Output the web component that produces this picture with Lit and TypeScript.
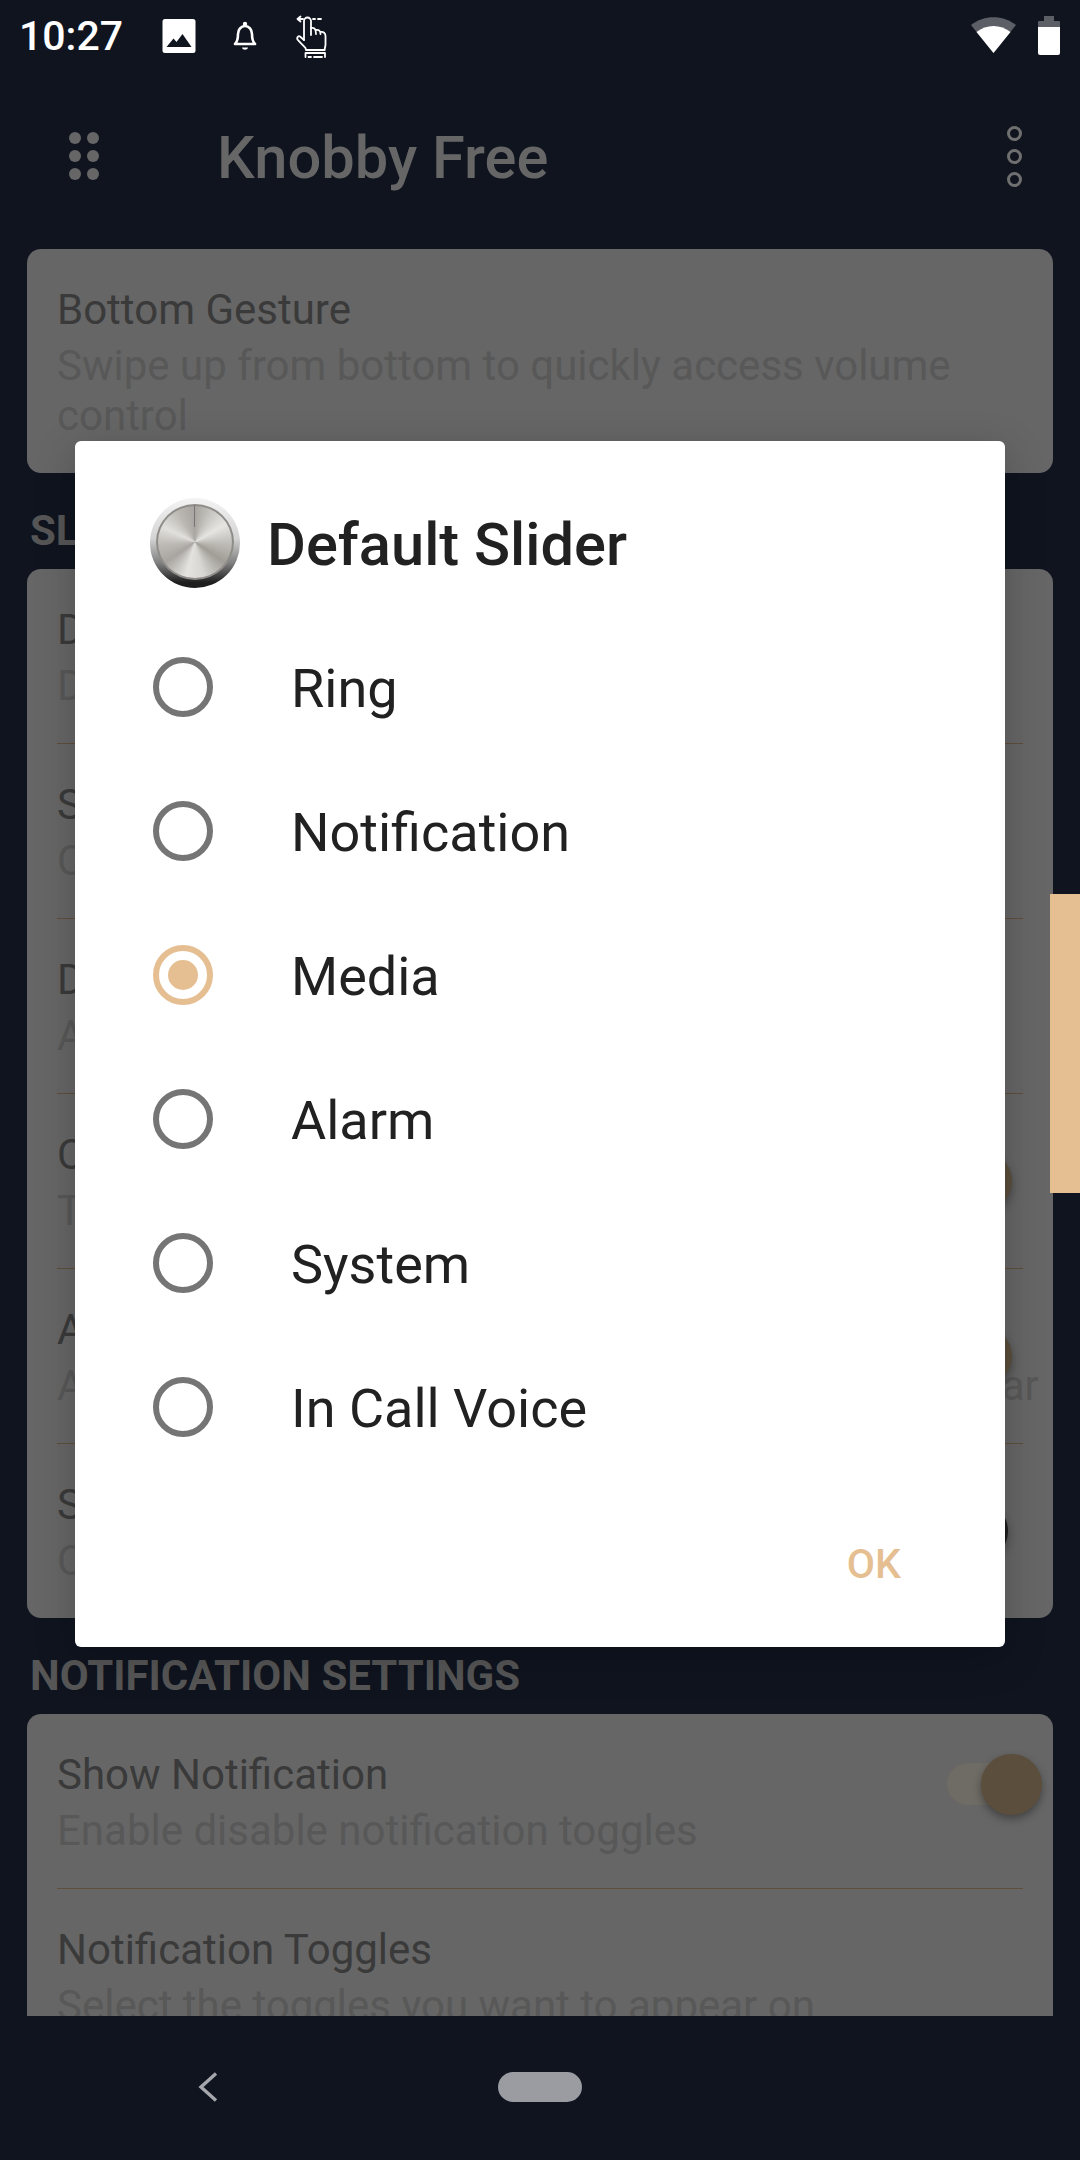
import { html, css, LitElement } from 'lit';
import { customElement } from 'lit/decorators.js';

const CHANNELS = ['Ring', 'Notification', 'Media', 'Alarm', 'System', 'In Call Voice'];
const SELECTED = 'Media';

interface Row {
  title: string;
  sub: string;
  swatch?: string;
}

const SLIDER_ROWS: Row[] = [
  { title: 'Default Slider', sub: 'Default volume slider to show' },
  { title: 'Slider Style', sub: 'Choose the slider style' },
  { title: 'Dismiss Timeout', sub: 'Auto hide after a few seconds' },
  { title: 'Color', sub: 'Tint for the slider', swatch: 'accent' },
  { title: 'Accent', sub: 'Accent color applied to the sliders and the status bar', swatch: 'accent' },
  { title: 'Slider Background', sub: 'Color of the slider', swatch: 'dark' },
];

@customElement('app-root')
export class AppRoot extends LitElement {
  static styles = css`
    :host {
      display: flex;
      flex-direction: column;
      position: relative;
      width: 1080px;
      height: 2160px;
      overflow: hidden;
      background: #0f141f;
      font-family: Roboto, sans-serif;
    }

    .status {
      height: 72px;
      flex: none;
      position: relative;
    }

    .time {
      position: absolute;
      left: 19px;
      top: 13px;
      font-size: 41px;
      line-height: 46px;
      font-weight: 500;
      color: #fff;
    }

    .status svg {
      position: absolute;
      display: block;
    }

    .toolbar {
      height: 177px;
      flex: none;
      display: flex;
      align-items: center;
      padding-bottom: 9px;
      box-sizing: border-box;
      position: relative;
    }

    .dots {
      margin-left: 69px;
      display: grid;
      grid-template-columns: 12px 12px;
      gap: 6px;
    }

    .dots i {
      width: 12px;
      height: 12px;
      border-radius: 50%;
      background: #666;
    }

    .app-title {
      margin-left: 118px;
      padding-top: 4px;
      font-size: 59.6px;
      font-weight: 500;
      color: #666;
      flex: 1;
    }

    .more {
      margin-right: 58px;
      display: flex;
      flex-direction: column;
      gap: 8px;
    }

    .more i {
      width: 15px;
      height: 15px;
      box-sizing: border-box;
      border: 3px solid #6f6f6f;
      border-radius: 50%;
    }

    .main {
      flex: 1;
      min-height: 0;
      overflow: hidden;
      padding: 0 27px;
    }

    .card {
      background: #666;
      border-radius: 14px;
      padding: 0 30px;
    }

    .section {
      font-size: 42px;
      line-height: 44px;
      font-weight: 700;
      color: #565656;
      padding: 36px 0 16px 3px;
    }

    .row {
      position: relative;
      padding: 33px 0 32px;
      border-bottom: 1px solid #5f4e3a;
    }

    .row:last-child {
      border-bottom: none;
    }

    .row-title {
      font-size: 42px;
      line-height: 56px;
      color: #3a3a3a;
      white-space: nowrap;
    }

    .row-sub {
      margin-top: 3px;
      font-size: 42px;
      line-height: 50px;
      color: #585858;
    }

    .row-sub.single {
      white-space: nowrap;
    }

    .swatch {
      position: absolute;
      right: 11px;
      top: 50%;
      width: 60px;
      height: 60px;
      margin-top: -30px;
      border-radius: 50%;
      box-shadow: 0 4px 8px rgba(0, 0, 0, 0.3);
    }

    .swatch.accent {
      background: #5b4e3c;
    }

    .swatch.dark {
      background: #1d1d1d;
      right: 15px;
    }

    .switch {
      position: absolute;
      right: -19px;
      top: 40px;
      width: 95px;
      height: 61px;
    }

    .switch .track {
      position: absolute;
      left: 0;
      right: 20px;
      top: 9px;
      height: 42px;
      border-radius: 21px;
      background: #6f6b65;
    }

    .switch .thumb {
      position: absolute;
      right: 0;
      top: 0;
      width: 61px;
      height: 61px;
      border-radius: 50%;
      background: #5b4e3c;
      box-shadow: 0 4px 8px rgba(0, 0, 0, 0.35);
    }

    .nav {
      height: 144px;
      flex: none;
      position: relative;
      display: flex;
      align-items: center;
      padding-bottom: 3px;
      box-sizing: border-box;
    }

    .nav svg {
      margin-left: 198px;
      display: block;
    }

    .home {
      margin-left: 280px;
      width: 84px;
      height: 30px;
      border-radius: 15px;
      background: #9a9ca2;
    }

    .handle {
      position: absolute;
      right: 0;
      top: 894px;
      width: 30px;
      height: 299px;
      background: #e5bf92;
    }

    .dialog {
      position: absolute;
      left: 75px;
      top: 441px;
      width: 930px;
      height: 1206px;
      background: #fff;
      border-radius: 6px;
      box-shadow: 0 10px 40px rgba(0, 0, 0, 0.22);
      display: flex;
      flex-direction: column;
    }

    .dialog-head {
      height: 174px;
      box-sizing: border-box;
      padding: 57px 0 27px 75px;
      display: flex;
      align-items: center;
      gap: 27px;
    }

    .dialog-title {
      font-size: 59.6px;
      font-weight: 500;
      color: #212121;
      padding-top: 3px;
    }

    .knob {
      position: relative;
      width: 90px;
      height: 90px;
      flex: none;
      border-radius: 50%;
      background: linear-gradient(180deg, #f4f4f4 0%, #d4d4d4 45%, #808080 72%, #1e1e1e 94%);
    }

    .knob .face {
      position: absolute;
      inset: 6px 6px 8px;
      border-radius: 50%;
      border: 2px solid #8f8d89;
      box-sizing: border-box;
      background: conic-gradient(
        #a8a5a0 0deg, #c9c7c2 30deg, #e6e5e2 60deg, #bdbab5 95deg, #a09d97 125deg,
        #d8d6d2 165deg, #e4e3e0 195deg, #a8a5a0 235deg, #bdbab5 265deg, #e2e0dd 295deg,
        #bbb8b3 330deg, #a8a5a0 360deg
      );
    }

    .knob .tick {
      position: absolute;
      left: 44px;
      top: 7px;
      width: 1px;
      height: 22px;
      background: #77757a;
    }

    .option {
      height: 144px;
      flex: none;
      display: flex;
      align-items: center;
      padding-left: 78px;
      font-size: 54px;
      color: #212121;
    }

    .option-label {
      padding-top: 3px;
    }

    .radio {
      width: 60px;
      height: 60px;
      flex: none;
      box-sizing: border-box;
      border: 6px solid #757575;
      border-radius: 50%;
      margin-right: 78px;
      display: flex;
      align-items: center;
      justify-content: center;
    }

    .radio.on {
      border-color: #e5bf92;
    }

    .radio.on::after {
      content: '';
      width: 30px;
      height: 30px;
      border-radius: 50%;
      background: #e5bf92;
    }

    .actions {
      flex: 1;
      display: flex;
      justify-content: flex-end;
      padding: 63px 104px 0 0;
      font-size: 41px;
      line-height: 44px;
      font-weight: 500;
      color: #e5bf92;
    }
  `;

  renderStatus() {
    return html`
      <div class="status">
        <span class="time">10:27</span>
        <svg style="left:162px;top:19px" width="34" height="34" viewBox="0 0 33 34">
          <rect width="33" height="34" rx="2.5" fill="#fff"/>
          <path d="M4 28 L11 19.5 L14 23 L20 15 L29 28 Z" fill="#0f141f"/>
        </svg>
        <svg style="left:233px;top:21px" width="24" height="30" viewBox="0 0 24 30">
          <circle cx="12" cy="3" r="2.2" fill="#fff"/>
          <path d="M2 23 C5 20 5 17 5 13 C5 8.5 8 5 12 5 C16 5 19 8.5 19 13 C19 17 19 20 22 23 Z" fill="none" stroke="#fff" stroke-width="2.6" stroke-linejoin="round"/>
          <path d="M9 26.5 H15 C14.5 29.5 9.5 29.5 9 26.5 Z" fill="#fff"/>
        </svg>
        <svg style="left:296px;top:15px" width="31" height="43" viewBox="0 0 31 43" fill="none" stroke="#fff" stroke-width="1.8" stroke-linecap="round" stroke-linejoin="round">
          <path d="M1.5 4 H7 M4.5 1.5 L1.5 4 L4.5 6.5 M17 4 H19 M22 4 H25"/>
          <path d="M8 25 V6 A3.5 3.5 0 0 1 15 6 V20"/>
          <path d="M15 13 C18.5 12.5 20 14 20 19 M20 15 C23 14.5 24.5 16 24.5 19 M24.5 17 C27.5 16.5 29.5 18 29.5 21 V30 L28.5 35"/>
          <path d="M8 25 L4 21.5 C2.5 20.5 .5 22.5 1.5 24.5 C3.5 27 7 30 9.5 33 L10 35 H28.5"/>
          <path d="M9.5 38 V42 M29 38 V42 M9.5 38 H29 M12.5 42 H15 M18 42 H26"/>
        </svg>
        <svg style="left:971px;top:17px" width="45" height="36" viewBox="0 0 45 36">
          <path d="M22.5 36 L0 8 C13 -2.5 32 -2.5 45 8 Z" fill="#5c5f66"/>
          <path d="M22.5 36 L5.5 15 C15.5 7 29.5 7 39.5 15 Z" fill="#fff"/>
        </svg>
        <svg style="left:1038px;top:16px" width="22" height="39" viewBox="0 0 22 39">
          <path d="M6 0 H16 V5 H21 A1 1 0 0 1 22 6 V11 H0 V6 A1 1 0 0 1 1 5 H6 Z" fill="#5c5f66"/>
          <path d="M0 11 H22 V37 A2 2 0 0 1 20 39 H2 A2 2 0 0 1 0 37 Z" fill="#fff"/>
        </svg>
      </div>
    `;
  }

  renderToolbar() {
    return html`
      <div class="toolbar">
        <div class="dots">${[0, 1, 2, 3, 4, 5].map(() => html`<i></i>`)}</div>
        <div class="app-title">Knobby Free</div>
        <div class="more"><i></i><i></i><i></i></div>
      </div>
    `;
  }

  renderRow(row: Row) {
    return html`
      <div class="row">
        <div class="row-title">${row.title}</div>
        <div class="row-sub single">${row.sub}</div>
        ${row.swatch ? html`<div class="swatch ${row.swatch}"></div>` : ''}
      </div>
    `;
  }

  renderDialog() {
    return html`
      <div class="dialog">
        <div class="dialog-head">
          <div class="knob"><div class="face"></div><div class="tick"></div></div>
          <div class="dialog-title">Default Slider</div>
        </div>
        ${CHANNELS.map(
          (name) => html`
            <div class="option">
              <span class="radio ${name === SELECTED ? 'on' : ''}"></span>
              <span class="option-label">${name}</span>
            </div>
          `
        )}
        <div class="actions">OK</div>
      </div>
    `;
  }

  render() {
    return html`
      ${this.renderStatus()}
      ${this.renderToolbar()}
      <div class="main">
        <div class="card">
          <div class="row">
            <div class="row-title">Bottom Gesture</div>
            <div class="row-sub">Swipe up from bottom to quickly access volume control</div>
          </div>
        </div>
        <div class="section">SLIDER SETTINGS</div>
        <div class="card">${SLIDER_ROWS.map((row) => this.renderRow(row))}</div>
        <div class="section">NOTIFICATION SETTINGS</div>
        <div class="card">
          <div class="row">
            <div class="row-title">Show Notification</div>
            <div class="row-sub">Enable disable notification toggles</div>
            <div class="switch"><div class="track"></div><div class="thumb"></div></div>
          </div>
          <div class="row">
            <div class="row-title">Notification Toggles</div>
            <div class="row-sub">Select the toggles you want to appear on notification</div>
          </div>
        </div>
      </div>
      <div class="nav">
        <svg width="20" height="30" viewBox="0 0 20 30" fill="none" stroke="#a5a7ac" stroke-width="3.4">
          <path d="M18 1.5 L3 15 L18 28.5"/>
        </svg>
        <div class="home"></div>
      </div>
      <div class="handle"></div>
      ${this.renderDialog()}
    `;
  }
}
